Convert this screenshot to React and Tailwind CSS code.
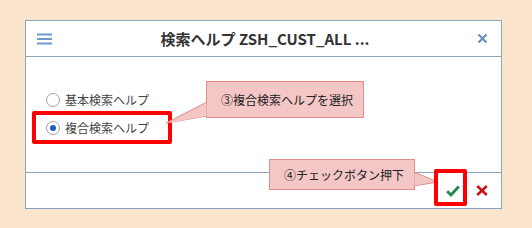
import React from "react";

export default function App() {
  const font = { fontFamily: '"Noto Sans CJK JP", "Noto Sans", sans-serif' };
  return (
    <div className="relative w-[532px] h-[228px] bg-[#fce5cd] overflow-hidden" style={font}>
      <div className="pl-[25px] pt-[20px]">
        <div className="w-[477px] h-[189px] border border-[#8ea5c0] bg-white flex flex-col">
          <div className="h-[36px] border-b border-[#8ea5c0] flex items-center px-[11px] relative">
            <svg width="16" height="12" viewBox="0 0 16 12" className="shrink-0">
              <rect x="0" y="0.5" width="15" height="2" fill="#6f9ad0" />
              <rect x="0" y="5" width="15" height="2" fill="#6f9ad0" />
              <rect x="0" y="9.5" width="15" height="2" fill="#6f9ad0" />
            </svg>
            <div className="flex-1 text-center text-[15px] font-bold text-[#333] leading-none">
              検索ヘルプ ZSH_CUST_ALL ...
            </div>
            <svg width="11" height="11" viewBox="0 0 11 11" className="shrink-0 mr-[2px]">
              <path d="M1.5 1.5 L9.5 9.5 M9.5 1.5 L1.5 9.5" stroke="#6b8fbf" strokeWidth="2.2" strokeLinecap="butt" />
            </svg>
          </div>
          <div className="flex-1 flex flex-col pl-[20px] pt-[36px] gap-[14px]">
            <div className="flex items-center gap-[5px] h-[14px]">
              <span className="w-[14px] h-[14px] rounded-full border border-[#9aa3ad] bg-white" />
              <span className="text-[12px] text-[#444] leading-none">基本検索ヘルプ</span>
            </div>
            <div className="flex items-center gap-[5px] h-[14px]">
              <span className="w-[14px] h-[14px] rounded-full border border-[#9aa3ad] bg-white flex items-center justify-center">
                <span className="w-[6px] h-[6px] rounded-full bg-[#1a5fb4]" />
              </span>
              <span className="text-[12px] text-[#444] leading-none">複合検索ヘルプ</span>
            </div>
          </div>
          <div className="h-[36px] border-t border-[#8ea5c0] flex items-center justify-end pr-[13px] gap-[18px]">
            <svg width="14" height="12" viewBox="0 0 14 12" className="mr-[-2px]">
              <path d="M1.2 6.2 L5 10 L12.8 1.5" fill="none" stroke="#1f8a4c" strokeWidth="2.8" />
            </svg>
            <svg width="12" height="11" viewBox="0 0 12 11">
              <path d="M1.2 1 L10.8 10 M10.8 1 L1.2 10" stroke="#cc1111" strokeWidth="2.4" />
            </svg>
          </div>
        </div>
      </div>

      {/* red highlight around radio 2 */}
      <div className="absolute left-[32px] top-[111px] w-[140px] h-[33px] border-[4px] border-[#ff0000] rounded-[2px]" />

      {/* callout tails (outlines) */}
      <svg className="absolute left-0 top-0" width="532" height="228" style={{ pointerEvents: "none" }}>
        <polygon points="207,102 166,123 207,116" fill="#f4c6c6" stroke="#e68a8a" strokeWidth="1" />
        <polygon points="414,172 438,182 414,186" fill="#f4c6c6" stroke="#e68a8a" strokeWidth="1" />
      </svg>

      {/* callout 1 */}
      <div className="absolute left-[206px] top-[81px] w-[158px] h-[37px] bg-[#f4c6c6] border border-[#e68a8a] flex items-center pl-[14px]">
        <span className="text-[12px] text-[#222] leading-none">③複合検索ヘルプを選択</span>
      </div>
      <svg className="absolute left-0 top-0" width="532" height="228" style={{ pointerEvents: "none" }}>
        <polygon points="206.5,103 206.5,116 170,122.5" fill="#f4c6c6" />
      </svg>

      {/* callout 2 */}
      <div className="absolute left-[269px] top-[159px] w-[146px] h-[31px] bg-[#f4c6c6] border border-[#e68a8a] flex items-center pl-[14px]">
        <span className="text-[12px] text-[#222] leading-none">④チェックボタン押下</span>
      </div>
      <svg className="absolute left-0 top-0" width="532" height="228" style={{ pointerEvents: "none" }}>
        <polygon points="414.5,173 414.5,185.5 434,181.5" fill="#f4c6c6" />
      </svg>

      {/* red highlight around check */}
      <div className="absolute left-[434px] top-[169px] w-[33px] h-[37px] border-[4px] border-[#ff0000] rounded-[2px]" />
    </div>
  );
}
